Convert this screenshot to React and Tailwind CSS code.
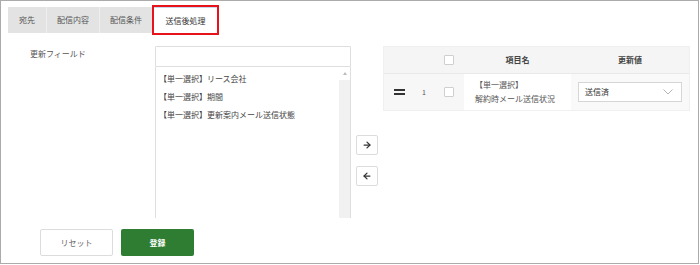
import { ArrowRight, ArrowLeft } from 'lucide-react';

const tabs = ['宛先', '配信内容', '配信条件'];
const fields = ['【単一選択】リース会社', '【単一選択】期間', '【単一選択】更新案内メール送信状態'];

function Checkbox() {
  return <span className="block w-[10px] h-[10px] border border-[#cfcfcf] bg-white rounded-[1px]" />;
}

export default function App() {
  return (
    <div
      className="w-[699px] h-[264px] border border-[#ababab] bg-white text-[8px] leading-[12px] text-[#444] overflow-hidden"
      style={{ fontFamily: '"Noto Sans CJK JP", "Noto Sans", sans-serif' }}
    >
      {/* tabs */}
      <div className="flex pl-[7px] pt-[6px] h-[32px]">
        {tabs.map((t, i) => (
          <div
            key={t}
            className={`h-[26px] flex items-center justify-center bg-[#e3e3e3] text-[#555] ${i > 0 ? 'border-l border-[#efefef]' : ''} ${i === 0 ? 'w-[38px]' : 'w-[53px]'}`}
          >
            {t}
          </div>
        ))}
        <div className="relative ml-[2px] w-[63px] h-[26px] flex items-center justify-center bg-white border-t border-[#c9d7ea] text-[#333]">
          送信後処理
          <span className="absolute -left-[2px] -right-[2px] -top-[3px] -bottom-[2px] border-2 border-[#e8121b]" />
        </div>
      </div>

      {/* body */}
      <div className="flex pl-[29px] pt-[13px]">
        <div className="w-[125px] pt-[2px] text-[#555]">更新フィールド</div>

        <div className="w-[196px]">
          <div className="h-[21px] border border-[#dedede] rounded-[1px] bg-white" />
          <div className="h-[151px] flex border-l border-r border-[#dedede]">
            <div className="flex-1 pl-[3px] pt-[3px] text-[#444]">
              {fields.map((f) => (
                <div key={f} className="h-[18px] flex items-center">{f}</div>
              ))}
            </div>
            <div className="w-[11px] flex flex-col bg-[#f1f1f1]">
              <div className="h-[13px] bg-white flex items-start justify-center pt-[5px]">
                <span className="w-0 h-0 border-l-[2px] border-r-[2px] border-b-[3px] border-l-transparent border-r-transparent border-b-[#bbb]" />
              </div>
            </div>
          </div>
        </div>

        <div className="ml-[5px] w-[22px] flex flex-col gap-[11px] pt-[89px]">
          <button className="w-[22px] h-[20px] border border-[#dcdcdc] rounded-[2px] bg-white flex items-center justify-center text-[#333]">
            <ArrowRight size={10} strokeWidth={3} />
          </button>
          <button className="w-[22px] h-[20px] border border-[#dcdcdc] rounded-[2px] bg-white flex items-center justify-center text-[#333]">
            <ArrowLeft size={10} strokeWidth={3} />
          </button>
        </div>

        <div className="ml-[5px] w-[307px] self-start border border-[#f0f0f0]">
          <div className="flex h-[27px] items-center bg-[#f5f5f5] border-b border-[#e8e8e8] font-bold text-[#444]">
            <div className="w-[30px]" />
            <div className="w-[20px]" />
            <div className="w-[30px] flex justify-center"><Checkbox /></div>
            <div className="w-[107px] text-center">項目名</div>
            <div className="flex-1 text-center">更新値</div>
          </div>
          <div className="flex h-[36px]">
            <div className="w-[80px] flex items-center bg-[#f7f7f7]">
              <div className="w-[30px] flex flex-col items-center gap-[2px]">
                <span className="block w-[11px] h-[2px] bg-[#333]" />
                <span className="block w-[11px] h-[2px] bg-[#333]" />
              </div>
              <div className="w-[20px] text-center text-[#555] text-[7px]">1</div>
              <div className="w-[30px] flex justify-center"><Checkbox /></div>
            </div>
            <div className="w-[107px] bg-white pl-[11px] flex flex-col justify-center leading-[14px] text-[#555]">
              <div>【単一選択】</div>
              <div>解約時メール送信状況</div>
            </div>
            <div className="flex-1 bg-[#f9f9f9] flex items-center pl-[7px]">
              <div className="w-[104px] h-[20px] border border-[#d6d6d6] bg-white flex items-center justify-between pl-[6px] pr-[8px] text-[#333]">
                <span>送信済</span>
                <svg width="10" height="6" viewBox="0 0 10 6" fill="none">
                  <polyline points="0.5,0.5 5,5 9.5,0.5" stroke="#b5b5b5" strokeWidth="1" />
                </svg>
              </div>
            </div>
          </div>
        </div>
      </div>

      {/* footer */}
      <div className="flex gap-[8px] pl-[39px] pt-[11px]">
        <button className="w-[73px] h-[27px] border border-[#dcdcdc] rounded-[2px] bg-white text-[#666]">リセット</button>
        <button className="w-[73px] h-[27px] rounded-[2px] bg-[#2e7d32] text-white font-bold">登録</button>
      </div>
    </div>
  );
}
